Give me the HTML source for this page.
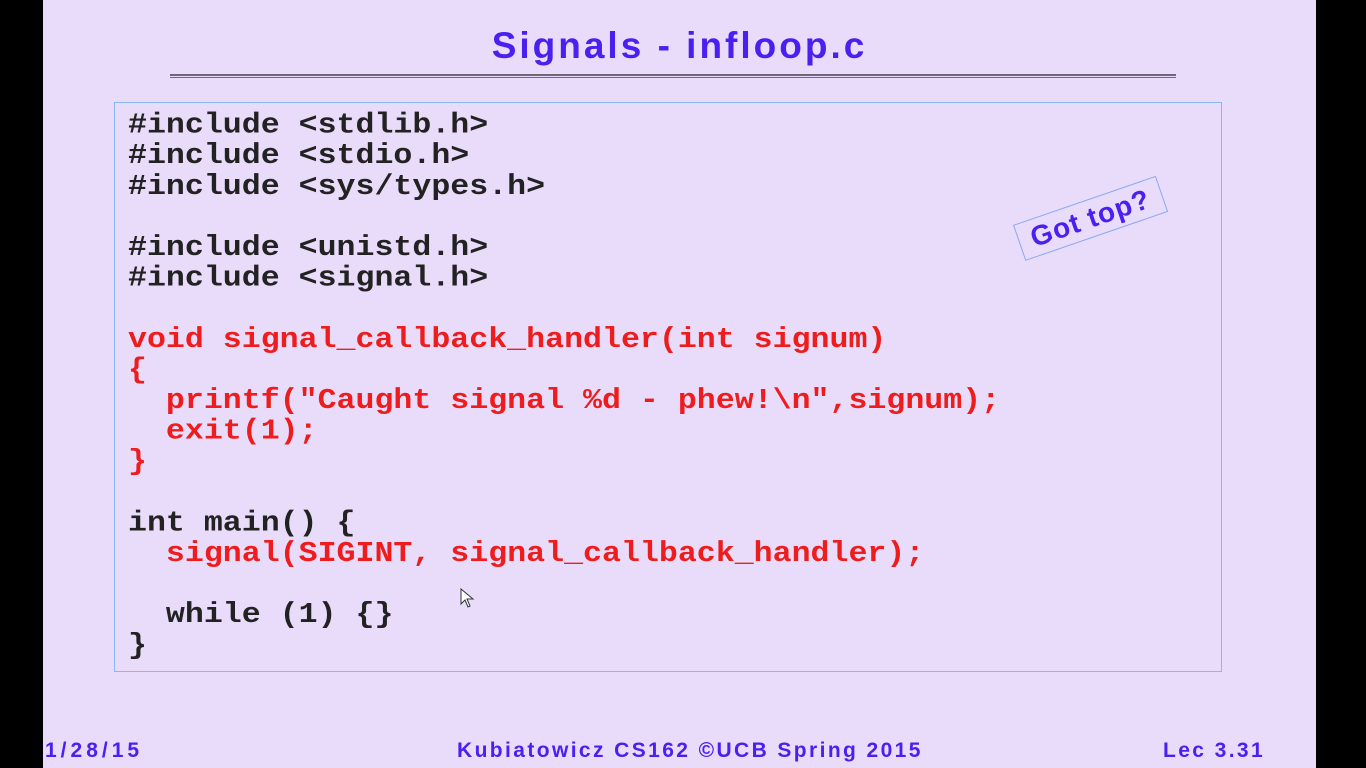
<!DOCTYPE html>
<html><head><style>
body{margin:0;width:1366px;height:768px;background:#000;overflow:hidden;position:relative;font-family:"Liberation Sans",sans-serif}
.slide{position:absolute;left:43px;top:0;width:1273px;height:768px;background:#e9dcfb}
.title{position:absolute;left:0;width:1273px;top:24px;text-align:center;font-weight:bold;font-size:37px;color:#4b1ff0;line-height:44px;letter-spacing:3px}
.rule{position:absolute;left:127px;width:1006px;top:74px;height:1px;border-top:2px solid #6a6a7a;border-bottom:1px solid #6a6a7a}
.box{position:absolute;left:71px;top:102px;width:1106px;height:568px;border:1px solid #8ab8f0}
pre{position:absolute;left:85px;top:111px;margin:0;font-family:"Liberation Mono",monospace;font-weight:bold;font-size:31.6px;line-height:34px;color:#222;transform:scaleY(0.9);transform-origin:left top}
.r{color:#ee1c1c}
.got{position:absolute;padding:2px 12px;border:1px solid #8aa8f0;font-weight:bold;font-size:28px;color:#4b1ff0;transform:rotate(-19deg);transform-origin:left top;letter-spacing:1px}
.ft{position:absolute;top:739px;font-weight:bold;font-size:21px;color:#4b1ff0;line-height:24px;letter-spacing:2.4px}
</style></head><body>
<div class="slide">
<div class="title">Signals - infloop.c</div>
<div class="rule"></div>
<div class="box"></div>
<pre>#include &lt;stdlib.h&gt;
#include &lt;stdio.h&gt;
#include &lt;sys/types.h&gt;

#include &lt;unistd.h&gt;
#include &lt;signal.h&gt;

<span class="r">void signal_callback_handler(int signum)
{
  printf("Caught signal %d - phew!\n",signum);
  exit(1);
}</span>

int main() {
  <span class="r">signal(SIGINT, signal_callback_handler);</span>

  while (1) {}
}</pre>
<svg style="position:absolute;left:417px;top:588px" width="16" height="22"><path d="M1 1 L1 16 L5 12 L8 19 L10 18 L7 11 L13 11 Z" fill="#fff" stroke="#333" stroke-width="1"/></svg>
<div class="got" style="top:225px;left:970px">Got top?</div>
<div class="ft" style="left:2px;letter-spacing:4px">1/28/15</div>
<div class="ft" style="left:414px">Kubiatowicz CS162 ©UCB Spring 2015</div>
<div class="ft" style="left:1120px">Lec 3.31</div>
</div>
</body></html>
